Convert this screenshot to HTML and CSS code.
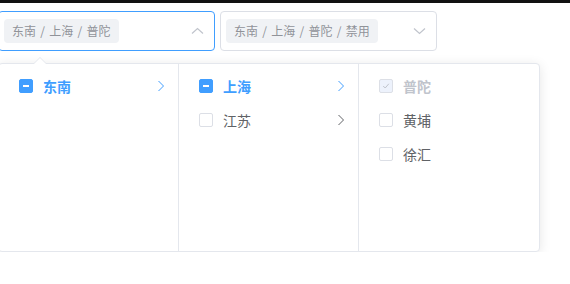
FILE: index.html
```html
<!DOCTYPE html>
<html lang="zh">
<head>
    <meta charset="UTF-8">
    <meta name="viewport" content="width=device-width, initial-scale=1.0">
    <title>级联选择器</title>
    <link rel="stylesheet" href="styles.css">
</head>
<body>
    <div class="topbar"></div>

    <div class="demo">
        <div class="cascader is-focus">
            <span class="tag">东南 / 上海 / 普陀</span>
            <svg class="suffix" width="25" height="12" viewBox="0 0 25 12">
                <path d="M7 8.5 L12.5 3.5 L18 8.5" fill="none" stroke="#c0c4cc" stroke-width="1.2"/>
            </svg>
        </div>
        <div class="cascader">
            <span class="tag">东南 / 上海 / 普陀 / 禁用</span>
            <svg class="suffix" width="25" height="12" viewBox="0 0 25 12">
                <path d="M7 3.5 L12.5 8.5 L18 3.5" fill="none" stroke="#c0c4cc" stroke-width="1.2"/>
            </svg>
        </div>
    </div>

    <div class="panel">
        <div class="popper-arrow"></div>

        <ul class="menu">
            <li class="node is-active">
                <span class="checkbox is-indeterminate"></span>
                <span class="label">东南</span>
                <svg class="postfix" width="14" height="14" viewBox="0 0 14 14">
                    <path d="M4.5 2 L9.5 7 L4.5 12" fill="none" stroke="currentColor" stroke-width="1"/>
                </svg>
            </li>
        </ul>

        <ul class="menu">
            <li class="node is-active">
                <span class="checkbox is-indeterminate"></span>
                <span class="label">上海</span>
                <svg class="postfix" width="14" height="14" viewBox="0 0 14 14">
                    <path d="M4.5 2 L9.5 7 L4.5 12" fill="none" stroke="currentColor" stroke-width="1"/>
                </svg>
            </li>
            <li class="node">
                <span class="checkbox"></span>
                <span class="label">江苏</span>
                <svg class="postfix" width="14" height="14" viewBox="0 0 14 14">
                    <path d="M4.5 2 L9.5 7 L4.5 12" fill="none" stroke="currentColor" stroke-width="1"/>
                </svg>
            </li>
        </ul>

        <ul class="menu">
            <li class="node is-disabled">
                <span class="checkbox is-checked">
                    <svg width="12" height="12" viewBox="0 0 12 12">
                        <path d="M3.2 6 L5.2 8 L8.8 3.8" fill="none" stroke="#c0c4cc" stroke-width="1"/>
                    </svg>
                </span>
                <span class="label">普陀</span>
            </li>
            <li class="node">
                <span class="checkbox"></span>
                <span class="label">黄埔</span>
            </li>
            <li class="node">
                <span class="checkbox"></span>
                <span class="label">徐汇</span>
            </li>
        </ul>
    </div>
</body>
</html>
```

FILE: styles.css
```css
body {
    margin: 0;
    font-family: "Noto Sans CJK SC", "Noto Sans", sans-serif;
    background-color: #fff;
    color: #606266;
}
.topbar {
    height: 3px;
    background-color: #111;
}
.demo {
    display: flex;
    gap: 5px;
    margin-top: 8px;
    margin-left: -2px;
}
.cascader {
    box-sizing: border-box;
    width: 217px;
    height: 40px;
    border: 1px solid #dcdfe6;
    border-radius: 4px;
    display: flex;
    align-items: center;
    padding-left: 5px;
}
.cascader.is-focus {
    border-color: #409eff;
}
.tag {
    box-sizing: border-box;
    height: 24px;
    line-height: 24px;
    padding: 0 8px;
    font-size: 12px;
    word-spacing: 1.6px;
    color: #909399;
    background-color: #f0f2f5;
    border-radius: 4px;
    white-space: nowrap;
}
.suffix {
    margin-left: auto;
    margin-right: 4px;
}
.panel {
    position: relative;
    display: flex;
    width: max-content;
    margin-top: 12px;
    margin-left: -2px;
    border: 1px solid #e4e7ed;
    border-radius: 4px;
    background-color: #fff;
    box-shadow: 0 2px 12px 0 rgba(0, 0, 0, 0.1);
}
.popper-arrow {
    position: absolute;
    top: -7px;
    left: 35px;
    width: 0;
    height: 0;
    border-left: 6px solid transparent;
    border-right: 6px solid transparent;
    border-bottom: 6px solid #e4e7ed;
}
.popper-arrow::after {
    content: "";
    position: absolute;
    top: 1px;
    left: -6px;
    border-left: 6px solid transparent;
    border-right: 6px solid transparent;
    border-bottom: 6px solid #fff;
}
.menu {
    box-sizing: border-box;
    width: 180px;
    height: 187px;
    margin: 0;
    padding: 5px 0 6px;
    list-style: none;
    border-right: 1px solid #e4e7ed;
}
.menu:last-child {
    border-right: none;
    width: 180px;
}
.node {
    display: flex;
    align-items: center;
    height: 34px;
    padding: 0 10px 0 20px;
    font-size: 14px;
    color: #606266;
}
.node.is-active {
    color: #409eff;
    font-weight: bold;
}
.node.is-disabled {
    color: #c0c4cc;
    font-weight: bold;
}
.checkbox {
    box-sizing: border-box;
    width: 14px;
    height: 14px;
    border: 1px solid #dcdfe6;
    border-radius: 2px;
    background-color: #fff;
    margin-right: 10px;
    display: flex;
    align-items: center;
    justify-content: center;
}
.checkbox.is-indeterminate {
    background-color: #409eff;
    border-color: #409eff;
}
.checkbox.is-indeterminate::before {
    content: "";
    width: 6px;
    height: 2px;
    background-color: #fff;
}
.checkbox.is-checked {
    background-color: #edf2fc;
}
.postfix {
    margin-left: auto;
    color: #606266;
}
.node.is-active .postfix {
    color: #409eff;
}
```
